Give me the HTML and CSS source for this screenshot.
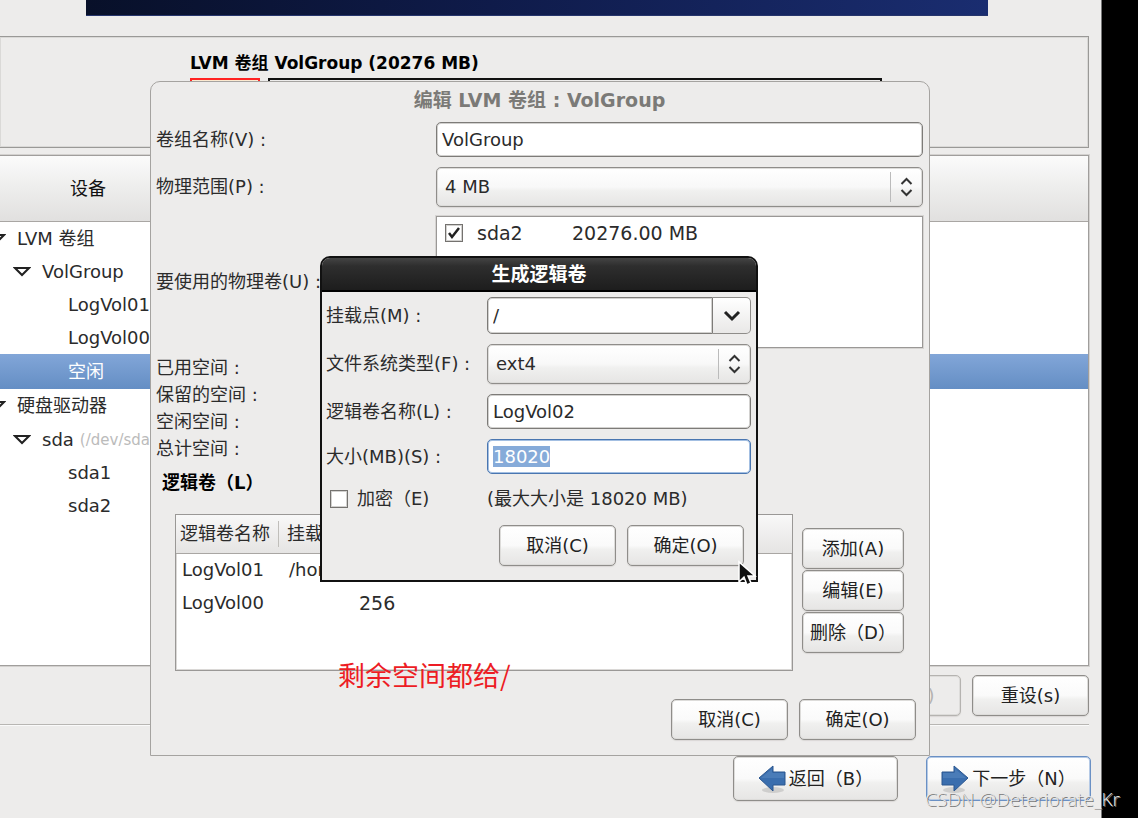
FILE: index.html
```html
<!DOCTYPE html>
<html lang="zh-CN">
<head>
<meta charset="utf-8">
<title>生成逻辑卷</title>
<link rel="stylesheet" href="styles.css">
</head>
<body>
<main class="installer">
  <div class="banner"></div>
  <section class="disk">
    <div class="disk-title">LVM 卷组 VolGroup (20276 MB)</div>
    <div class="slices"><span class="slice slice-active"></span><span class="slice slice-rest"></span></div>
  </section>
  <section class="devices">
    <div class="devices-head">设备</div>
    <ul class="tree">
      <li class="node root"><svg class="tri" viewBox="0 0 18 12"><path d="M2 2H16L9 9Z"/></svg>LVM 卷组</li>
      <li class="node group"><svg class="tri" viewBox="0 0 18 12"><path d="M2 2H16L9 9Z"/></svg>VolGroup</li>
      <li class="node leaf">LogVol01</li>
      <li class="node leaf">LogVol00</li>
      <li class="node leaf selected">空闲</li>
      <li class="node root tall"><svg class="tri" viewBox="0 0 18 12"><path d="M2 2H16L9 9Z"/></svg>硬盘驱动器</li>
      <li class="node group"><svg class="tri" viewBox="0 0 18 12"><path d="M2 2H16L9 9Z"/></svg>sda <small class="path">(/dev/sda)</small></li>
      <li class="node leaf">sda1</li>
      <li class="node leaf">sda2</li>
    </ul>
  </section>
  <div class="actions">
    <button class="btn" type="button" disabled>删除(D)</button>
    <button class="btn" type="button">重设(s)</button>
  </div>
  <nav class="nav">
    <button class="btn btn-nav" type="button">
      <svg class="arrow" viewBox="0 0 28 30"><ellipse cx="15" cy="26" rx="11" ry="3" fill="#000" opacity=".12"/><path d="M1 14L15 2V8H27V21H15V27Z" fill="#3a6eae" stroke="#2a568f"/><path d="M3 14L14 5V9H26V14Z" fill="#6b98cc" opacity=".35"/></svg>返回（B）</button>
    <button class="btn btn-nav btn-default" type="button">
      <svg class="arrow" viewBox="0 0 28 30"><ellipse cx="13" cy="26" rx="11" ry="3" fill="#000" opacity=".12"/><path d="M27 14L13 2V8H1V21H13V27Z" fill="#3a6eae" stroke="#2a568f"/><path d="M25 14L14 5V9H2V14Z" fill="#6b98cc" opacity=".35"/></svg>下一步（N）</button>
  </nav>
</main>
<aside class="screen-edge"></aside>

<form class="window group-window">
  <h2 class="window-title">编辑 LVM 卷组 : VolGroup</h2>
  <div class="group-form">
    <label for="vg">卷组名称(V) :</label>
    <input class="field" id="vg" type="text" value="VolGroup">
    <label for="pe">物理范围(P) :</label>
    <span class="picker">
      <select class="select" id="pe"><option>4 MB</option></select>
      <svg class="updown" viewBox="0 0 14 20"><path d="M2 7L7 2L12 7M2 13L7 18L12 13"/></svg>
    </span>
    <span>要使用的物理卷(U) :</span>
    <div class="volumes">
      <label class="volume"><input class="check" type="checkbox" checked><span class="volume-name">sda2</span><span>20276.00 MB</span></label>
    </div>
  </div>
  <div class="totals">
    <span>已用空间 :</span><span>保留的空间 :</span><span>空闲空间 :</span><span>总计空间 :</span>
  </div>
  <h3 class="section-title">逻辑卷（L）</h3>
  <div class="logical">
    <div class="table-frame">
      <table class="table">
        <thead><tr><th class="col-name"><span class="head-cell">逻辑卷名称</span></th><th class="col-mount">挂载点</th><th></th></tr></thead>
        <tbody>
          <tr><td>LogVol01</td><td>/home</td><td></td></tr>
          <tr><td>LogVol00</td><td></td><td class="num">256</td></tr>
        </tbody>
      </table>
    </div>
    <div class="side-buttons">
      <button class="btn" type="button">添加(A)</button>
      <button class="btn" type="button">编辑(E)</button>
      <button class="btn" type="button">删除（D）</button>
    </div>
  </div>
  <div class="window-buttons">
    <button class="btn" type="button">取消(C)</button>
    <button class="btn" type="button">确定(O)</button>
  </div>
</form>

<form class="window volume-window">
  <h2 class="title-bar">生成逻辑卷</h2>
  <div class="volume-form">
    <label for="mount">挂载点(M) :</label>
    <span class="combo">
      <input class="field" id="mount" type="text" value="/">
      <button class="combo-btn" type="button" aria-label="挂载点"><svg class="chevron" viewBox="0 0 18 12"><path d="M2 2L9 9L16 2"/></svg></button>
    </span>
    <label for="fs">文件系统类型(F) :</label>
    <span class="picker">
      <select class="select" id="fs"><option>ext4</option></select>
      <svg class="updown" viewBox="0 0 14 20"><path d="M2 7L7 2L12 7M2 13L7 18L12 13"/></svg>
    </span>
    <label for="lv">逻辑卷名称(L) :</label>
    <input class="field" id="lv" type="text" value="LogVol02">
    <label for="size">大小(MB)(S) :</label>
    <input class="field field-size" id="size" type="text" value="18020">
    <label class="encrypt"><input class="check" type="checkbox">加密（E)</label>
    <span>(最大大小是 18020 MB)</span>
  </div>
  <div class="window-buttons">
    <button class="btn" type="button">取消(C)</button>
    <button class="btn" type="button">确定(O)</button>
  </div>
</form>

<svg class="pointer" viewBox="0 0 20 28"><path d="M2 2V22L7 17L10 25L14 23L11 16H18Z" fill="#111" stroke="#fff" stroke-width="1.5"/></svg>
<p class="note">剩余空间都给/</p>
<p class="watermark">CSDN @Deteriorate_Kr</p>
<script src="main.js"></script>
</body>
</html>
```
FILE: main.js
```js
document.getElementById("size").select();
```
FILE: styles.css
```css
* { box-sizing: border-box; }

body {
  margin: 0;
  position: relative;
  display: grid;
  grid-template-columns: 1fr 37px;
  min-height: 100vh;
  overflow: hidden;
  background: #edeceb;
  color: #2b2b2b;
  font: 18px/26px "DejaVu Sans", "Noto Sans CJK SC", sans-serif;
  white-space: nowrap;
}

h2, h3, p, ul { margin: 0; padding: 0; }
input, select, button { font: inherit; color: inherit; margin: 0; }

.installer { padding-right: 12px; }
.screen-edge { background: #000; border-left: 1px solid #777; }

.banner {
  height: 16px;
  margin: 0 101px 0 86px;
  background: linear-gradient(90deg, #081029, #0f1b4a 45%, #1a2d70);
  border-bottom: 1px solid #26356c;
}

.disk {
  height: 112px;
  margin-top: 20px;
  padding: 13px 206px 0 190px;
  border: 1px solid #9a9997;
  border-left: 0;
  box-shadow: inset 0 0 0 1px #dad9d7;
}
.disk-title { color: #000; font-weight: bold; font-size: 17px; }
.slices { display: flex; gap: 8px; padding-top: 2px; }
.slice { height: 40px; border: 2px solid #111; }
.slice-active { width: 70px; border-color: #f22; background: #fbe9d0; }
.slice-rest { flex: 1; }

.devices {
  height: 511px;
  margin-top: 7px;
  border: 1px solid #a09e9c;
  border-left: 0;
  box-shadow: 0 0 0 1px #d3d1cf;
  background: #fff;
}
.devices-head {
  height: 66px;
  padding-left: 70px;
  line-height: 66px;
  color: #111;
  background: linear-gradient(#fbfbfb, #ededec 50%, #e1e0df);
  border-bottom: 1px solid #a9a6a3;
}
.tree { list-style: none; }
.node { display: flex; align-items: center; height: 33px; }
.node.root { padding-left: 17px; }
.node.group { padding-left: 42px; }
.node.leaf { padding-left: 68px; }
.node.tall { height: 34px; }
.node.selected { height: 35px; color: #fff; background: linear-gradient(#82a6d8, #648ec4); }
.tri { width: 18px; height: 12px; margin: 0 11px 0 -29px; fill: #fff; stroke: #222; stroke-width: 2; }
.path { margin-left: 6px; font-size: 15px; color: #bbb; }

.btn {
  height: 41px;
  min-width: 117px;
  padding: 0 6px;
  border: 1px solid #8f8d8a;
  border-radius: 5px;
  box-shadow: inset 0 0 0 1px #dddcda, 0 1px 1px #dad8d6;
  background: linear-gradient(#fff, #fafafa 50%, #f0f0ef 60%, #e6e5e4);
  color: #222;
}
.btn:disabled { color: #b5b3b0; border-color: #b5b3b0; background: #edeceb; }

.actions {
  display: flex;
  justify-content: flex-end;
  gap: 11px;
  height: 59px;
  padding-top: 9px;
  border-bottom: 1px solid #b8b6b3;
  box-shadow: 0 1px 0 #fafafa;
}
.nav { display: flex; justify-content: flex-end; gap: 28px; margin: 31px -2px 0 0; }
.btn-nav { display: flex; align-items: center; justify-content: center; gap: 3px; width: 165px; height: 45px; }
.btn-default { border-color: #6a90c4; box-shadow: inset 0 0 0 1px #b5cae6; }
.arrow { width: 28px; height: 30px; flex: none; }

.window { position: absolute; background: #edeceb; }
.group-window {
  left: 150px;
  top: 81px;
  width: 780px;
  height: 675px;
  padding: 5px 6px 0 5px;
  border: 1px solid #a5a3a0;
  border-radius: 10px 10px 0 0;
}
.window-title { font-size: 19px; line-height: 26px; text-align: center; color: #7b7a77; }

.group-form {
  display: grid;
  grid-template-columns: 280px 1fr;
  grid-template-rows: 35px 41px 132px;
  row-gap: 9px;
  align-items: center;
  padding-top: 9px;
}
.field {
  width: 100%;
  min-width: 0;
  height: 35px;
  padding: 0 5px;
  border: 1px solid #7d7b78;
  border-radius: 5px;
  box-shadow: inset 0 0 0 1px #d2d1cf;
  background: #fff;
  outline: 0;
}
.picker { position: relative; display: block; }
.select {
  display: block;
  width: 100%;
  height: 40px;
  padding: 0 8px;
  border: 1px solid #8f8d8a;
  border-radius: 5px;
  box-shadow: inset 0 0 0 1px #dddcda, 0 1px 1px #dad8d6;
  appearance: none;
  background: linear-gradient(#fff, #f8f8f8 50%, #f0f0ef 60%, #e6e5e4);
}
.updown {
  position: absolute;
  right: 1px;
  top: 5px;
  width: 32px;
  height: 30px;
  padding: 5px 8px;
  border-left: 1px solid #bbb;
  fill: none;
  stroke: #333;
  stroke-width: 2;
  pointer-events: none;
}
.volumes { height: 132px; border: 1px solid #9a9896; box-shadow: 0 0 0 1px #d6d4d2; background: #fff; }
.volume { display: flex; align-items: center; height: 32px; padding-left: 8px; font-size: 19px; }
.volume-name { width: 95px; margin-left: 14px; }

.check {
  flex: none;
  width: 18px;
  height: 18px;
  appearance: none;
  border: 1px solid #74726f;
  box-shadow: inset 0 0 0 1px #d2d1cf;
  background: #fff;
}
.check:checked {
  background: #fff url("data:image/svg+xml,%3Csvg xmlns='http://www.w3.org/2000/svg' viewBox='0 0 16 16'%3E%3Cpath d='M3 8L6 12L13 3' fill='none' stroke='%23222' stroke-width='2.5'/%3E%3C/svg%3E");
}

.totals { display: grid; grid-auto-rows: 27px; padding-top: 7px; }
.section-title { padding: 7px 0 0 6px; font-size: 18px; line-height: 26px; color: #000; }

.logical { display: flex; gap: 9px; padding: 18px 19px 0 19px; }
.table-frame { flex: 1; height: 157px; border: 1px solid #9a9896; box-shadow: inset 0 0 0 1px #dad8d6; background: #fff; }
.table { width: 100%; table-layout: fixed; border-collapse: collapse; text-align: left; }
.table th {
  height: 38px;
  padding: 0 4px;
  font-weight: normal;
  background: linear-gradient(#f8f8f8, #e5e4e3);
  border-bottom: 1px solid #a9a6a3;
}
.table td { height: 33px; padding: 0 6px; }
.table .col-name { width: 107px; }
.head-cell { display: block; border-right: 1px solid #c0beba; }
.table .col-mount { width: 70px; }
.table .num { font-size: 19px; }
.side-buttons { display: flex; flex-direction: column; gap: 1px; width: 102px; padding-top: 14px; }
.side-buttons .btn { min-width: 0; width: 102px; padding: 0; }

.window-buttons { display: flex; justify-content: flex-end; gap: 11px; padding: 28px 7px 0 0; }

.volume-window {
  left: 320px;
  top: 256px;
  width: 438px;
  height: 326px;
  border: 2px solid #111;
  border-radius: 10px 10px 0 0;
}
.title-bar {
  height: 34px;
  border-bottom: 2px solid #000;
  border-radius: 8px 8px 0 0;
  background: linear-gradient(#444, #2e2e2e 25%, #1d1d1d);
  color: #fff;
  font-size: 19px;
  line-height: 32px;
  text-align: center;
}
.volume-form {
  display: grid;
  grid-template-columns: 161px 1fr;
  grid-template-rows: 37px 40px 35px 35px 30px;
  row-gap: 10px;
  align-items: center;
  padding: 5px 5px 0 4px;
}
.combo { display: flex; }
.combo .field { height: 37px; border-radius: 5px 0 0 5px; }
.combo-btn {
  flex: none;
  width: 38px;
  padding: 0;
  border: 1px solid #8f8d8a;
  border-left: 0;
  border-radius: 0 5px 5px 0;
  background: linear-gradient(#fff, #e9e8e7);
}
.chevron { display: block; width: 18px; height: 12px; margin: 0 auto; fill: none; stroke: #222; stroke-width: 3; }
.field-size { border-color: #4a76b0; box-shadow: inset 0 0 0 1px #a3bfe2; }
.field-size::selection { color: #fff; background: #86abd9; }
.encrypt { display: flex; align-items: center; gap: 9px; padding-left: 4px; }
.volume-window .window-buttons { padding: 11px 12px 0 0; }

.pointer { position: absolute; left: 737px; top: 560px; width: 20px; height: 28px; }
.note {
  position: absolute;
  left: 338px;
  top: 657px;
  color: #ed1c24;
  font: 27px/36px "Noto Sans CJK SC", sans-serif;
}
.watermark {
  position: absolute;
  left: 925px;
  top: 787px;
  color: #e8e8e8;
  font: 300 19px/24px "Open Sans", sans-serif;
  text-shadow: 1px 1px 0 #777;
}
```
